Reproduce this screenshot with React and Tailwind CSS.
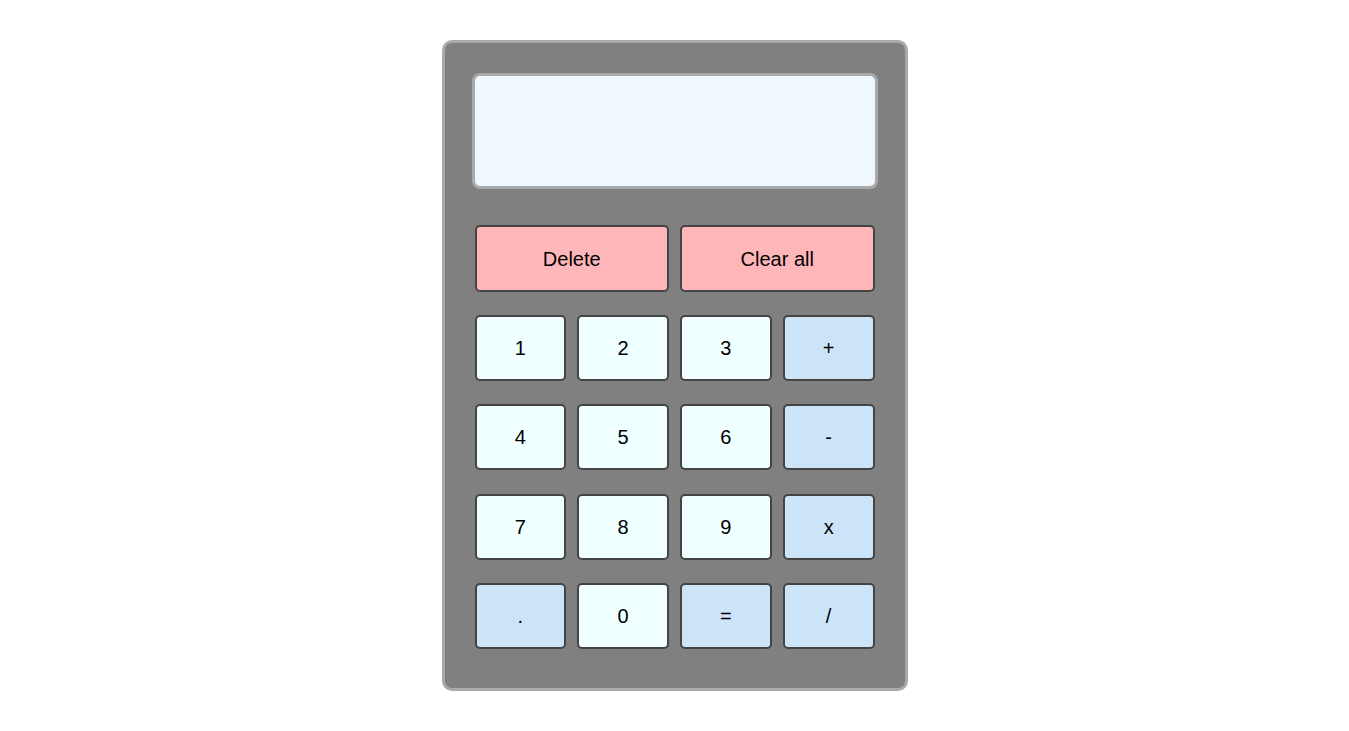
const keys = [
  { label: "1", op: false },
  { label: "2", op: false },
  { label: "3", op: false },
  { label: "+", op: true },
  { label: "4", op: false },
  { label: "5", op: false },
  { label: "6", op: false },
  { label: "-", op: true },
  { label: "7", op: false },
  { label: "8", op: false },
  { label: "9", op: false },
  { label: "x", op: true },
  { label: ".", op: true },
  { label: "0", op: false },
  { label: "=", op: true },
  { label: "/", op: true },
];

function Key({ label, op }) {
  return (
    <button
      className={
        op
          ? "h-[66px] rounded-[5px] border-2 border-[#444] bg-[#cce4f8] text-[20px] text-black"
          : "h-[66px] rounded-[5px] border-2 border-[#444] bg-[#f0ffff] text-[20px] text-black"
      }
    >
      {label}
    </button>
  );
}

export default function App() {
  return (
    <div
      className="flex min-h-[731px] justify-center bg-white pt-[40px]"
      style={{ fontFamily: '"Liberation Sans", Arial, sans-serif' }}
    >
      <div className="h-[651px] w-[466px] rounded-[10px] border-[3px] border-[#a9a9a9] bg-[#808080] px-[27px] pt-[30px]">
        <div className="h-[116px] w-full rounded-[8px] border-[3px] border-[#a9a9a9] bg-[#f0f8ff]" />
        <div className="mt-[36px] px-[3px]">
          <div className="grid grid-cols-2 gap-x-[11px]">
            <button className="h-[67px] rounded-[5px] border-2 border-[#444] bg-[#ffb6b9] text-[20px] text-black">
              Delete
            </button>
            <button className="h-[67px] rounded-[5px] border-2 border-[#444] bg-[#ffb6b9] text-[20px] text-black">
              Clear all
            </button>
          </div>
          <div className="mt-[23px] grid grid-cols-4 gap-x-[11px] gap-y-[23.33px]">
            {keys.map((k) => (
              <Key key={k.label} label={k.label} op={k.op} />
            ))}
          </div>
        </div>
      </div>
    </div>
  );
}
